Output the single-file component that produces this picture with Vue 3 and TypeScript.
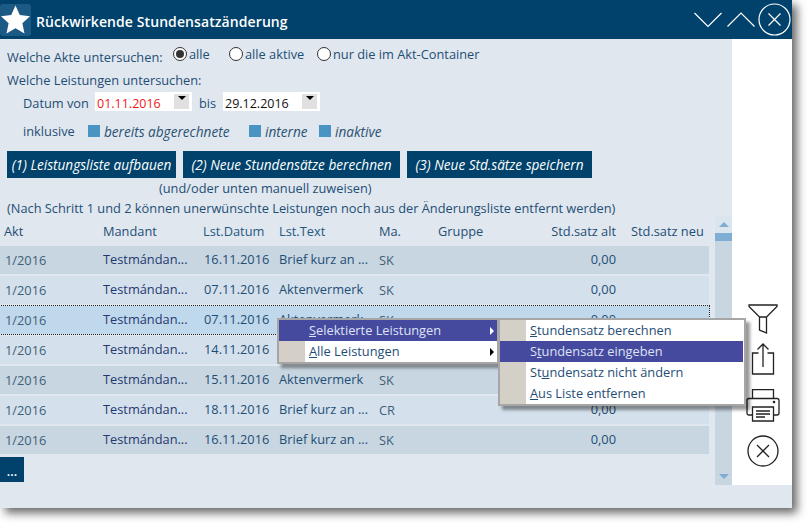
<template>
  <div class="page">
    <div class="window">
      <header class="titlebar">
        <div class="star-box">
          <svg width="31" height="31" viewBox="0 0 31 31"><path d="M15.5 1.5l4.3 9.6 10.2 1.1-7.6 7 2.1 10.3-9-5.2-9 5.2 2.1-10.3-7.6-7 10.2-1.1z" fill="#fff" /></svg>
        </div>
        <h1 class="title">Rückwirkende Stundensatzänderung</h1>
        <div class="win-buttons">
          <svg width="30" height="17" viewBox="0 0 30 17"><path d="M1.500 2L15 15.500 28.500 2" class="line" /></svg>
          <svg width="30" height="17" viewBox="0 0 30 17" class="up-btn"><path d="M1.500 15.500L15 2 28.500 15.500" class="line" /></svg>
          <svg width="33" height="33" viewBox="0 0 33 33"><circle cx="16.500" cy="16.500" r="15.500" class="line" /><path d="M10.500 10.500l12 12M22.500 10.500l-12 12" class="line" /></svg>
        </div>
      </header>

      <div class="body">
        <main class="content">
          <div class="form-row akte-row">
            <span class="akte-label">Welche Akte untersuchen:</span>
            <label v-for="r in radios" :key="r.label" class="radio" :style="{ width: r.width + 'px' }">
              <span class="radio-dot" :class="{ checked: r.checked }"></span>{{ r.label }}
            </label>
          </div>
          <div class="leist-label">Welche Leistungen untersuchen:</div>
          <div class="form-row date-row">
            <span class="date-von">Datum von</span>
            <div class="date-input red">01.11.2016<span class="drop"></span></div>
            <span class="date-bis">bis</span>
            <div class="date-input">29.12.2016<span class="drop"></span></div>
          </div>
          <div class="form-row incl-row">
            <span class="incl-label">inklusive</span>
            <span class="check"></span><em class="incl-first">bereits abgerechnete</em>
            <span class="check"></span><em class="incl-second">interne</em>
            <span class="check"></span><em>inaktive</em>
          </div>
          <div class="actions">
            <button class="action one">(1) Leistungsliste aufbauen</button>
            <button class="action two">(2) Neue Stundensätze berechnen</button>
            <button class="action three">(3) Neue Std.sätze speichern</button>
          </div>
          <div class="hint-center">(und/oder unten manuell zuweisen)</div>
          <div class="hint">(Nach Schritt 1 und 2 können unerwünschte Leistungen noch aus der Änderungsliste entfernt werden)</div>

          <div class="table-area">
            <div class="table">
              <div class="grid head">
                <span>Akt</span><span>Mandant</span><span>Lst.Datum</span><span>Lst.Text</span><span>Ma.</span><span>Gruppe</span>
                <span class="num">Std.satz alt</span><span class="neu">Std.satz neu</span>
              </div>
              <div
                v-for="(row, i) in rows"
                :key="i"
                class="grid row"
                :class="{ odd: i % 2 === 0, selected: i === 2 }"
              >
                <span class="akt first">1/2016</span>
                <span class="mandant">Testmándan...</span>
                <span class="date">{{ row.date }}</span>
                <span class="text">{{ row.text }}</span>
                <span class="akt ma">{{ row.ma }}</span>
                <span></span>
                <span class="num">0,00</span>
                <span></span>
              </div>
              <button class="more">...</button>
            </div>
            <div class="scrollbar">
              <div class="scroll-btn"><span class="arrow up"></span></div>
              <div class="thumb"></div>
              <div class="track"></div>
              <div class="scroll-btn low"><span class="arrow down"></span></div>
            </div>
          </div>
        </main>

        <aside class="side">
          <svg width="30" height="31" viewBox="0 0 30 31" class="funnel"><path d="M1 1h28v1.500L18.500 13v16l-7-3V13L1 2.500zM11.500 13h7" class="dark" /></svg>
          <svg width="24" height="33" viewBox="0 0 24 33" class="share"><path d="M7.500 11H1.500v21h21V11h-6M12 25V2M6.500 7.500L12 2l5.500 5.500" class="dark" /></svg>
          <svg width="34" height="33" viewBox="0 0 34 33" class="printer">
            <path d="M6.500 9.500V.700h21v8.800M6.500 26H3q-2 0-2-2V11.500q0-2 2-2h28q2 0 2 2V24q0 2-2 2h-3.500" class="dark" />
            <path d="M6.500 18h21v14h-21zM10 22h14M10 25h14M10 28h9" class="dark" />
            <circle cx="28" cy="13" r="1.300" fill="#222" />
          </svg>
          <svg width="32" height="32" viewBox="0 0 32 32" class="side-close"><circle cx="16" cy="16" r="15" class="dark" /><path d="M10 10l12 12M22 10L10 22" class="dark" /></svg>
        </aside>
      </div>

      <div class="statusbar"></div>

      <div class="menu main-menu">
        <div v-for="(m, i) in mainMenu" :key="m.key" class="item" :class="{ active: i === 0 }">
          <span class="gutter"></span>
          <span class="item-text">{{ m.before }}<u>{{ m.key }}</u>{{ m.after }}</span>
          <span class="submenu-arrow"></span>
        </div>
      </div>
      <div class="menu sub-menu">
        <div v-for="(m, i) in subMenu" :key="m.after" class="item" :class="{ active: i === 1 }">
          <span class="gutter"></span>
          <span class="item-text">{{ m.before }}<u>{{ m.key }}</u>{{ m.after }}</span>
        </div>
      </div>
    </div>
  </div>
</template>

<script setup lang="ts">
interface Row {
  date: string
  text: string
  ma: string
}

const radios = [
  { label: 'alle', checked: true, width: 56 },
  { label: 'alle aktive', checked: false, width: 88 },
  { label: 'nur die im Akt-Container', checked: false, width: 170 }
]

const rows: Row[] = [
  { date: '16.11.2016', text: 'Brief kurz an ...', ma: 'SK' },
  { date: '07.11.2016', text: 'Aktenvermerk', ma: 'SK' },
  { date: '07.11.2016', text: 'Aktenvermerk', ma: 'SK' },
  { date: '14.11.2016', text: 'Aktenvermerk', ma: 'SK' },
  { date: '15.11.2016', text: 'Aktenvermerk', ma: 'SK' },
  { date: '18.11.2016', text: 'Brief kurz an ...', ma: 'CR' },
  { date: '16.11.2016', text: 'Brief kurz an ...', ma: 'SK' }
]

const mainMenu = [
  { before: '', key: 'S', after: 'elektierte Leistungen' },
  { before: '', key: 'A', after: 'lle Leistungen' }
]

const subMenu = [
  { before: '', key: 'S', after: 'tundensatz berechnen' },
  { before: 'S', key: 't', after: 'undensatz eingeben' },
  { before: 'St', key: 'u', after: 'ndensatz nicht ändern' },
  { before: '', key: 'A', after: 'us Liste entfernen' }
]
</script>

<style scoped>
.page {
  width: 808px;
  height: 524px;
  background: #fff;
  overflow: hidden;
}

.window {
  position: relative;
  width: 792px;
  height: 508px;
  display: flex;
  flex-direction: column;
  background: #fff;
  box-shadow: 5px 5px 9px rgba(0, 0, 0, 0.6);
  font-family: "Open Sans", sans-serif;
  font-size: 12.8px;
  color: #1f4e75;
}

.titlebar {
  height: 39px;
  flex-shrink: 0;
  display: flex;
  align-items: center;
  background: #00426b;
  color: #fff;
}

.star-box {
  width: 31px;
  height: 32px;
  border-radius: 3px;
  background: #1b5a84;
  display: flex;
  align-items: center;
}

.title {
  margin: 3px 0 0 5px;
  font-size: 14px;
  font-weight: 600;
  letter-spacing: 0.09px;
}

.win-buttons {
  margin-left: auto;
  margin-right: 1px;
  display: flex;
  align-items: center;
  gap: 3px;
}

.up-btn {
  margin-right: -1px;
}

.line {
  fill: none;
  stroke: #fff;
  stroke-width: 1.2;
}

.body {
  flex: 1;
  display: flex;
  min-height: 0;
}

.content {
  width: 732px;
  background: #e0e7ef;
  display: flex;
  flex-direction: column;
}

.form-row {
  display: flex;
  align-items: center;
}

.akte-row {
  height: 18px;
  margin-top: 7px;
  padding-left: 7px;
}

.akte-label {
  width: 166px;
  padding-top: 3px;
}

.radio {
  display: flex;
  align-items: center;
  gap: 2px;
  margin-top: -3px;
}

.radio-dot {
  width: 12px;
  height: 12px;
  border: 1px solid #333;
  border-radius: 50%;
  background: #fff;
  position: relative;
}

.radio-dot.checked::after {
  content: '';
  position: absolute;
  left: 2px;
  top: 2px;
  width: 8px;
  height: 8px;
  border-radius: 50%;
  background: #333;
}

.leist-label {
  margin: 7px 0 0 7px;
  line-height: 18px;
}

.date-row {
  margin-top: 3px;
  height: 19px;
  padding-left: 23px;
}

.date-von {
  width: 72px;
  padding-top: 3px;
}

.date-bis {
  width: 24px;
  padding: 3px 0 0 7px;
}

.date-input {
  position: relative;
  width: 95px;
  height: 19px;
  padding-left: 2px;
  line-height: 23px;
  font-size: 12.5px;
  background: #fff;
  color: #111;
}

.date-input.red {
  color: #f01818;
}

.drop {
  position: absolute;
  right: 3px;
  top: 2px;
  width: 15px;
  height: 15px;
  background: #e0e0e0;
}

.drop::after {
  content: '';
  position: absolute;
  left: 4px;
  top: 2px;
  border-left: 4px solid transparent;
  border-right: 4px solid transparent;
  border-top: 4px solid #000;
}

.incl-row {
  margin-top: 10px;
  height: 20px;
  padding-left: 23px;
}

.incl-label {
  width: 65px;
}

.check {
  width: 12px;
  height: 12px;
  background: #4a94c4;
  margin-right: 4px;
}

.incl-row em {
  font-size: 13.6px;
  color: #2a5273;
  white-space: nowrap;
}

.incl-row em.incl-first {
  width: 145px;
}

.incl-row em.incl-second {
  width: 54px;
}

.actions {
  display: flex;
  gap: 7px;
  margin: 10px 0 0 7px;
}

.action {
  height: 27px;
  padding: 0;
  border: none;
  background: #00426b;
  color: #fff;
  font: italic 13.6px "Open Sans", sans-serif;
  white-space: nowrap;
}

.action.one {
  width: 169px;
}

.action.two {
  width: 217px;
}

.action.three {
  width: 185px;
}

.hint-center {
  margin: 1px 0 0 159px;
  line-height: 19px;
}

.hint {
  margin: 1px 0 0 7px;
  line-height: 19px;
}

.table-area {
  flex: 1;
  display: flex;
  min-height: 0;
  margin-top: -2px;
}

.table {
  width: 709px;
  margin-right: 6px;
}

.grid {
  display: grid;
  grid-template-columns: 99px 100px 76px 100px 59px 90px 88px 1fr;
  align-items: center;
}

.grid > span {
  white-space: nowrap;
}

.head {
  height: 30px;
  padding-left: 4px;
}

.head span:nth-child(3),
.head span:nth-child(4) {
  color: #24587f;
}

.neu {
  padding-left: 15px;
}

.row {
  height: 28px;
  margin-bottom: 2px;
  padding: 0 0 2px 4px;
  background: #d4e1ec;
  box-sizing: border-box;
}

.row.odd {
  background: #c8d6e1;
}

.row.selected {
  background: #c0d8ec;
  outline: 1px dotted #222;
}

.akt {
  color: #3f5f78;
  padding-top: 2px;
}

.akt.first {
  padding-left: 1px;
}

.mandant {
  color: #26386f;
}

.date {
  padding-left: 1px;
}

.num {
  text-align: right;
}

.more {
  display: block;
  width: 24px;
  height: 25px;
  margin-top: 3px;
  padding: 4px 0 0;
  border: none;
  background: #00426b;
  color: #fff;
  font: 600 12.5px "Open Sans", sans-serif;
}

.scrollbar {
  width: 17px;
  display: flex;
  flex-direction: column;
  background: #c8d6e1;
}

.scroll-btn {
  height: 17px;
  background: #dbe5ee;
  display: flex;
  align-items: center;
  justify-content: center;
}

.scroll-btn.low {
  background: #c8d6e1;
}

.thumb {
  height: 8px;
  background: #7fadd3;
}

.track {
  flex: 1;
}

.arrow {
  border-left: 5px solid transparent;
  border-right: 5px solid transparent;
}

.arrow.up {
  border-bottom: 5px solid #7fadd3;
}

.arrow.down {
  border-top: 5px solid #7fadd3;
}

.side {
  flex: 1;
  display: flex;
  flex-direction: column;
  align-items: center;
  padding: 265px 0 0 2px;
  background: #fff;
}

.dark {
  fill: none;
  stroke: #222;
  stroke-width: 1.3;
}

.funnel,
.share,
.printer,
.side-close {
  display: block;
}

.share {
  margin-top: 7px;
}

.printer {
  margin-top: 14px;
}

.side-close {
  margin-top: 13px;
}

.statusbar {
  height: 23px;
  flex-shrink: 0;
  background: #e0e7ef;
}

.menu {
  position: absolute;
  border: 2px solid #a6a6a6;
  background: #fff;
  box-shadow: 4px 4px 3px rgba(0, 0, 0, 0.4);
  box-sizing: border-box;
}

.main-menu {
  left: 277px;
  top: 318px;
  width: 222px;
}

.sub-menu {
  left: 498px;
  top: 318px;
  width: 248px;
  padding-right: 1px;
}

.item {
  position: relative;
  height: 21px;
  display: flex;
  align-items: center;
  color: #1f4e75;
  white-space: nowrap;
}

.item.active {
  background: #454a9f;
  color: #dfe3f5;
}

.item-text {
  padding-bottom: 2px;
}

.gutter {
  width: 26px;
  height: 100%;
  margin-right: 4px;
  background: #d4d0c8;
}

.item.active .gutter {
  background: transparent;
}

.submenu-arrow {
  position: absolute;
  right: 3px;
  top: 7px;
  border-top: 4px solid transparent;
  border-bottom: 4px solid transparent;
  border-left: 4px solid #000;
}

.item.active .submenu-arrow {
  border-left-color: #fff;
}
</style>
